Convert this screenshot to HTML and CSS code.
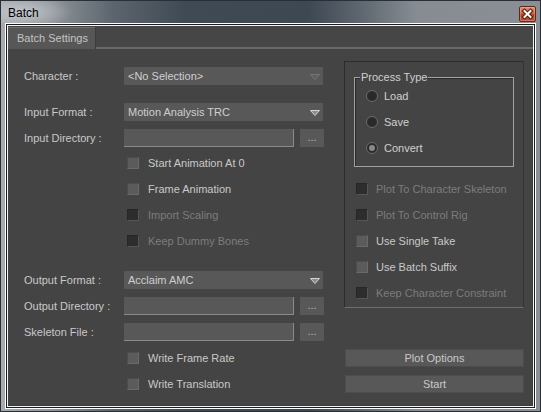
FILE: index.html
```html
<!DOCTYPE html>
<html>
<head>
<meta charset="utf-8">
<title>Batch</title>
<link rel="stylesheet" href="styles.css">
</head>
<body>
<div class="window">
  <div class="titlebar">
    <span class="title">Batch</span>
    <span class="close">
      <svg width="15" height="14" viewBox="0 0 15 14">
        <path d="M4.5 4 L10.5 10 M10.5 4 L4.5 10" stroke="#4a1a0e" stroke-width="4" stroke-linecap="square"/>
        <path d="M4.5 4 L10.5 10 M10.5 4 L4.5 10" stroke="#ffffff" stroke-width="2" stroke-linecap="square"/>
      </svg>
    </span>
  </div>
  <div class="frame-outer">
    <div class="frame-inner">
      <div class="tabs">
        <div class="tab">Batch Settings</div>
      </div>
      <div class="page">
        <div class="left">
          <div class="row gap-top">
            <span class="lbl">Character :</span>
            <div class="combo">
              <span>&lt;No Selection&gt;</span>
              <svg class="arrow" width="10" height="6" viewBox="0 0 10 6"><polygon points="0.5,0.5 9.5,0.5 5,5.5" fill="#5e5e5e" stroke="#767676"/></svg>
            </div>
          </div>
          <div class="row gap-top">
            <span class="lbl">Input Format :</span>
            <div class="combo">
              <span>Motion Analysis TRC</span>
              <svg class="arrow" width="10" height="6" viewBox="0 0 10 6"><polygon points="0.5,0.5 9.5,0.5 5,5.5" fill="#8c8c8c" stroke="#d2d2d2"/></svg>
            </div>
          </div>
          <div class="row gap-sm">
            <span class="lbl">Input Directory :</span>
            <div class="field"></div>
            <div class="browse">...</div>
          </div>
          <div class="row cb-row gap-xs">
            <span class="box"></span><span>Start Animation At 0</span>
          </div>
          <div class="row cb-row gap-sm">
            <span class="box"></span><span>Frame Animation</span>
          </div>
          <div class="row cb-row gap-sm disabled">
            <span class="box off"></span><span>Import Scaling</span>
          </div>
          <div class="row cb-row gap-sm disabled">
            <span class="box off"></span><span>Keep Dummy Bones</span>
          </div>
          <div class="row gap-lg">
            <span class="lbl">Output Format :</span>
            <div class="combo">
              <span>Acclaim AMC</span>
              <svg class="arrow" width="10" height="6" viewBox="0 0 10 6"><polygon points="0.5,0.5 9.5,0.5 5,5.5" fill="#8c8c8c" stroke="#d2d2d2"/></svg>
            </div>
          </div>
          <div class="row gap-sm">
            <span class="lbl">Output Directory :</span>
            <div class="field"></div>
            <div class="browse">...</div>
          </div>
          <div class="row gap-sm">
            <span class="lbl">Skeleton File :</span>
            <div class="field"></div>
            <div class="browse">...</div>
          </div>
          <div class="row cb-row gap-sm">
            <span class="box"></span><span>Write Frame Rate</span>
          </div>
          <div class="row cb-row gap-sm">
            <span class="box"></span><span>Write Translation</span>
          </div>
        </div>
        <div class="right">
          <div class="panel">
            <div class="group">
              <span class="group-title">Process Type</span>
              <div class="radio-row first"><span class="radio"></span><span>Load</span></div>
              <div class="radio-row"><span class="radio"></span><span>Save</span></div>
              <div class="radio-row"><span class="radio checked"></span><span>Convert</span></div>
            </div>
            <div class="prow first disabled"><span class="box off"></span><span>Plot To Character Skeleton</span></div>
            <div class="prow disabled"><span class="box off"></span><span>Plot To Control Rig</span></div>
            <div class="prow"><span class="box"></span><span>Use Single Take</span></div>
            <div class="prow"><span class="box"></span><span>Use Batch Suffix</span></div>
            <div class="prow disabled"><span class="box off"></span><span>Keep Character Constraint</span></div>
          </div>
          <div class="btn btn-first">Plot Options</div>
          <div class="btn">Start</div>
        </div>
      </div>
    </div>
  </div>
</div>
</body>
</html>
```
FILE: styles.css
```css
* { box-sizing: border-box; margin: 0; padding: 0; }
html, body { width: 541px; height: 412px; overflow: hidden; }
body {
  font-family: "Liberation Sans", Arial, sans-serif;
  font-size: 11px;
  color: #c9c9c9;
  background: #4a5058;
}
.window {
  width: 541px;
  height: 412px;
  border: 1px solid #2a2f35;
  display: flex;
  flex-direction: column;
  background: linear-gradient(90deg, #a7abaf 0%, #8f959a 9%, #5b646d 21%, #404a54 34%, #3e4852 57%, #5f6871 67%, #868c92 77%, #8a8f95 100%);
}
.titlebar {
  height: 22px;
  flex: none;
  display: flex;
  align-items: center;
  padding: 0 4px 0 7px;
  background: radial-gradient(ellipse 48px 16px at 24px 11px, rgba(225,228,232,0.55), rgba(225,228,232,0));
}
.title {
  color: #000;
  font-size: 12px;
  font-family: "Liberation Sans", Arial, sans-serif;
  padding-top: 1px;
}
.close {
  margin-left: auto;
  margin-top: 3px;
  width: 17px;
  height: 16px;
  border: 1px solid #5c2a1c;
  border-radius: 2px;
  background: linear-gradient(180deg, #e88a6c 0%, #d4603e 45%, #b8401f 55%, #c4502c 100%);
  box-shadow: inset 0 0 0 1px rgba(255,200,180,0.35);
  display: flex;
  align-items: center;
  justify-content: center;
}
.close svg { display: block; }
.frame-outer {
  flex: 1;
  margin: 0 4px 2px 4px;
  border: 1px solid #ffffff;
  padding: 1px;
  background: #1c1d1f;
  display: flex;
}
.frame-inner {
  flex: 1;
  border: 1px solid #f4f4f4;
  background: #444444;
  display: flex;
  flex-direction: column;
}
.tabs {
  height: 23px;
  flex: none;
  display: flex;
  align-items: flex-end;
  background: #464646;
  box-shadow: inset 0 -2px 0 #686868;
}
.tab {
  width: 88px;
  height: 22px;
  background: #575757;
  border-top: 1px solid #6c6c6c;
  border-right: 1px solid #3c3c3c;
  border-top-right-radius: 2px;
  padding-left: 9px;
  line-height: 20px;
  color: #c4c4c4;
}
.page {
  flex: 1;
  display: flex;
  background: #444444;
  box-shadow: inset -1px -1px 0 #3a3a3a;
}
.left {
  width: 336px;
  padding-left: 16px;
  display: flex;
  flex-direction: column;
}
.row {
  display: flex;
  align-items: center;
  height: 18px;
  flex: none;
}
.gap-top { margin-top: 18px; }
.gap-sm { margin-top: 8px; }
.gap-xs { margin-top: 7px; }
.gap-lg { margin-top: 21px; }
.lbl { width: 100px; white-space: nowrap; }
.combo {
  width: 199px;
  height: 18px;
  background: #585858;
  display: flex;
  align-items: center;
  justify-content: space-between;
  padding: 0 3px 0 4px;
  color: #cfcfcf;
}
.arrow { display: block; margin-top: 2px; }
.field {
  width: 170px;
  height: 18px;
  background: #585858;
  border-right: 1px solid #8a8a8a;
  border-bottom: 1px solid #8a8a8a;
}
.browse {
  width: 24px;
  height: 18px;
  margin-left: 6px;
  background: #585858;
  text-align: center;
  line-height: 17px;
  color: #b8b8b8;
  font-size: 11px;
}
.cb-row { padding-left: 103px; }
.box {
  width: 12px;
  height: 12px;
  flex: none;
  margin-right: 9px;
  background: #5b5b5b;
  border: 1px solid;
  border-color: #4c4c4c #6a6a6a #6a6a6a #4c4c4c;
}
.box.off {
  background: #2d2d2d;
  border-color: #262626 #555555 #555555 #262626;
}
.disabled { color: #7c7c7c; }
.right {
  width: 180px;
  display: flex;
  flex-direction: column;
}
.panel {
  margin-top: 12px;
  height: 247px;
  border: 1px solid #2c2c2c;
  border-bottom-color: #6e6e6e;
  border-right-color: #333333;
  display: flex;
  flex-direction: column;
}
.group {
  margin: 15px 0 0 9px;
  width: 160px;
  height: 90px;
  border: 1px solid #a2a2a2;
  box-shadow: inset 1px 1px 0 #2a2a2a;
  display: flex;
  flex-direction: column;
}
.group-title {
  align-self: flex-start;
  margin: -7px 0 0 5px;
  padding: 0 1px;
  line-height: 13px;
  background: #444444;
  color: #cfcfcf;
}
.radio-row {
  display: flex;
  align-items: center;
  height: 18px;
  margin-top: 8px;
  padding-left: 11px;
  color: #d0d0d0;
}
.radio-row.first { margin-top: 3px; }
.radio {
  width: 12px;
  height: 12px;
  border-radius: 50%;
  background: #2a2a2a;
  border: 1px solid #6c6c6c;
  margin-right: 6px;
  flex: none;
  display: flex;
  align-items: center;
  justify-content: center;
}
.radio.checked::after {
  content: "";
  width: 6px;
  height: 6px;
  border-radius: 50%;
  background: #8a8a8a;
}
.prow {
  display: flex;
  align-items: center;
  height: 18px;
  margin-top: 8px;
  padding-left: 11px;
}
.prow.first { margin-top: 13px; }
.prow .box { margin-right: 8px; }
.btn {
  margin-top: 8px;
  margin-left: 1px;
  width: 179px;
  height: 18px;
  background: #585858;
  border: 1px solid #4c4c4c;
  text-align: center;
  line-height: 16px;
  color: #c9c9c9;
}
.btn-first { margin-top: 41px; }
```
